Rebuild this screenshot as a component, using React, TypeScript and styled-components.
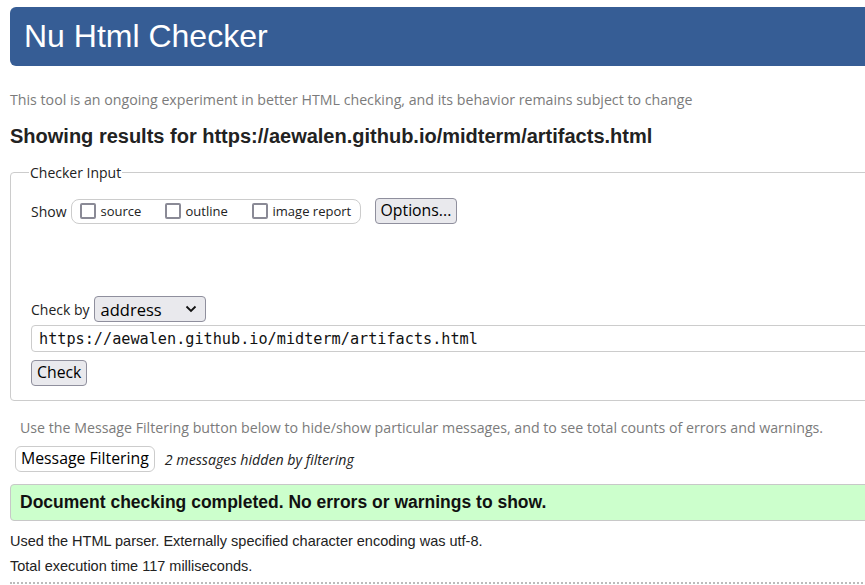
import React from "react";
import styled, { createGlobalStyle } from "styled-components";

const Global = createGlobalStyle`
  html, body { margin: 0; padding: 0; background: #fff; overflow: hidden; }
  body { width: 865px; height: 585px; }
`;

const Page = styled.div`
  width: 920px;
  padding-left: 10px;
  font-family: "Liberation Sans", Arial, sans-serif;
  color: #222;
`;

const Header = styled.header`
  margin-top: 7px;
  height: 59px;
  border-radius: 6px;
  background: #365d95;
  display: flex;
  align-items: center;
  padding-left: 14px;
`;

const Title = styled.h1`
  margin: 0;
  font-family: "Liberation Sans", Arial, sans-serif;
  font-weight: normal;
  font-size: 32px;
  color: #fff;
`;

const Note = styled.p`
  margin: 0;
  font-family: "Open Sans", "Noto Sans", sans-serif;
  font-size: 14.2px;
  color: #7b7b7b;
`;

const Intro = styled(Note)`
  margin-top: 24px;
`;

const Results = styled.h2`
  margin: 16px 0 0;
  font-size: 20px;
  font-weight: bold;
  color: #222;
`;

const Fieldset = styled.fieldset`
  margin: 15px 0 0;
  padding: 12px 20px 14px 20px;
  border: 1px solid #cccccc;
  border-radius: 4px;
  font-family: "Open Sans", "Noto Sans", sans-serif;
`;

const Legend = styled.legend`
  padding: 0 1px;
  margin-left: -2px;
  font-size: 14px;
  color: #222;
`;

const Row = styled.div`
  display: flex;
  align-items: center;
`;

const ShowRow = styled(Row)`
  margin-top: 4px;
`;

const Label = styled.span`
  font-size: 14px;
  color: #222;
  margin-right: 4px;
`;

const Pill = styled.div`
  display: flex;
  align-items: center;
  height: 23px;
  padding: 0 8px;
  border: 1px solid #cccccc;
  border-radius: 8px;
`;

const Opt = styled.label<{ $w: number }>`
  display: flex;
  align-items: center;
  width: ${(p) => p.$w}px;
  font-size: 13px;
  color: #222;
`;

const Box = styled.span`
  display: inline-block;
  width: 12px;
  height: 12px;
  border: 2px solid #8a8a96;
  border-radius: 2px;
  margin-right: 5px;
  background: #fff;
`;

const Btn = styled.button<{ $light?: boolean }>`
  font-family: "Open Sans", "Noto Sans", sans-serif;
  font-size: 15.8px;
  color: #000;
  height: 26px;
  padding: 0 5px;
  background: ${(p) => (p.$light ? "#fff" : "#e9e9ed")};
  border: 1px solid ${(p) => (p.$light ? "#cccccc" : "#8f8f9d")};
  border-radius: ${(p) => (p.$light ? "6px" : "4px")};
  line-height: 1;
`;

const OptionsBtn = styled(Btn)`
  margin-left: 14px;
`;

const Spacer = styled.div`
  height: 72px;
`;

const Select = styled.div`
  display: flex;
  align-items: center;
  justify-content: space-between;
  width: 96px;
  height: 24px;
  padding: 0 8px 0 6px;
  background: #e9e9ed;
  border: 1px solid #8f8f9d;
  border-radius: 4px;
  font-size: 16.5px;
  color: #000;
`;

const UrlInput = styled.div`
  margin-top: 3px;
  height: 25px;
  border: 1px solid #cccccc;
  border-radius: 4px;
  padding-left: 7px;
  display: flex;
  align-items: center;
  font-family: "DejaVu Sans Mono", "Liberation Mono", monospace;
  font-size: 15.2px;
  color: #111;
`;

const CheckWrap = styled.div`
  margin-top: 8px;
`;

const FilterNote = styled(Note)`
  margin-top: 17px;
  padding-left: 10px;
`;

const FilterRow = styled.div`
  display: flex;
  align-items: center;
  margin-top: 9px;
  padding-left: 5px;
  gap: 10px;
`;

const Hidden = styled.i`
  font-family: "Open Sans", "Noto Sans", sans-serif;
  font-size: 14.2px;
  color: #222;
`;

const Success = styled.div`
  margin-top: 12px;
  height: 35px;
  display: flex;
  align-items: center;
  padding-left: 9px;
  background: #ccffcc;
  border: 1px solid #c8c8c8;
  border-radius: 4px;
  font-weight: bold;
  font-size: 17.5px;
  color: #111;
`;

const Detail = styled.p<{ $top: number }>`
  margin: ${(p) => p.$top}px 0 0;
  font-size: 14.5px;
  color: #222;
`;

const Rule = styled.hr`
  margin: 8px 0 0;
  border: 0;
  border-top: 2px dotted #bbbbbb;
`;

const Chevron = () => (
  <svg width="12" height="8" viewBox="0 0 12 8">
    <path d="M1.5 1.5 L6 6 L10.5 1.5" fill="none" stroke="#111" strokeWidth="1.8" />
  </svg>
);

export default function App() {
  return (
    <>
      <Global />
      <Page>
        <Header>
          <Title>Nu Html Checker</Title>
        </Header>
        <Intro>This tool is an ongoing experiment in better HTML checking, and its behavior remains subject to change</Intro>
        <Results>Showing results for https://aewalen.github.io/midterm/artifacts.html</Results>
        <Fieldset>
          <Legend>Checker Input</Legend>
          <ShowRow>
            <Label>Show</Label>
            <Pill>
              <Opt $w={85}><Box />source</Opt>
              <Opt $w={87}><Box />outline</Opt>
              <Opt $w={100}><Box />image report</Opt>
            </Pill>
            <OptionsBtn>Options...</OptionsBtn>
          </ShowRow>
          <Spacer />
          <Row>
            <Label>Check by</Label>
            <Select>
              <span>address</span>
              <Chevron />
            </Select>
          </Row>
          <UrlInput>https://aewalen.github.io/midterm/artifacts.html</UrlInput>
          <CheckWrap>
            <Btn>Check</Btn>
          </CheckWrap>
        </Fieldset>
        <FilterNote>Use the Message Filtering button below to hide/show particular messages, and to see total counts of errors and warnings.</FilterNote>
        <FilterRow>
          <Btn $light>Message Filtering</Btn>
          <Hidden>2 messages hidden by filtering</Hidden>
        </FilterRow>
        <Success>Document checking completed. No errors or warnings to show.</Success>
        <Detail $top={12}>Used the HTML parser. Externally specified character encoding was utf-8.</Detail>
        <Detail $top={9}>Total execution time 117 milliseconds.</Detail>
        <Rule />
      </Page>
    </>
  );
}
